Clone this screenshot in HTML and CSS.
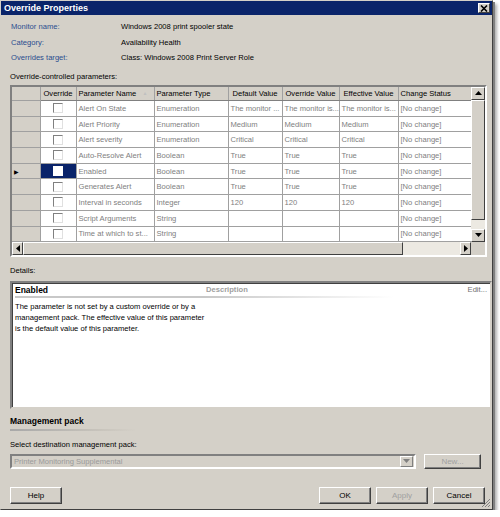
FILE: index.html
```html
<!DOCTYPE html>
<html lang="en">
<head>
  <meta charset="UTF-8">
  <title>Override Properties</title>
  <link rel="stylesheet" href="styles.css">
</head>
<body>
  <div class="window">
    <div class="titlebar">
      <span class="title">Override Properties</span>
      <span class="close-btn">
        <svg width="8" height="7" viewBox="0 0 8 7"><path d="M1 0.5 L7 6.5 M7 0.5 L1 6.5" stroke="#000" stroke-width="1.6"/></svg>
      </span>
    </div>

    <div class="content">
      <div class="info">
        <span class="info-label">Monitor name:</span><span>Windows 2008 print spooler state</span>
        <span class="info-label">Category:</span><span>Availability Health</span>
        <span class="info-label">Overrides target:</span><span>Class: Windows 2008 Print Server Role</span>
      </div>

      <p class="section-label">Override-controlled parameters:</p>

      <div class="grid-box">
        <div class="grid-table">
          <table>
            <colgroup>
              <col style="width:28px"><col style="width:36px"><col style="width:78px"><col style="width:74px">
              <col style="width:54px"><col style="width:57px"><col style="width:59px"><col style="width:73px">
            </colgroup>
            <thead>
              <tr>
                <th class="rowhead"></th>
                <th class="center">Override</th>
                <th>Parameter Name <span class="sort">&#9650;</span></th>
                <th>Parameter Type</th>
                <th class="center">Default Value</th>
                <th class="center">Override Value</th>
                <th class="center">Effective Value</th>
                <th>Change Status</th>
              </tr>
            </thead>
            <tbody id="rows"></tbody>
          </table>
        </div>
        <div class="vscroll">
          <span class="sbtn"><svg width="7" height="4" viewBox="0 0 7 4"><path d="M0 4 L3.5 0 L7 4Z" fill="#000"/></svg></span>
          <span class="vthumb"></span>
          <span class="vtrack"></span>
          <span class="sbtn"><svg width="7" height="4" viewBox="0 0 7 4"><path d="M0 0 L3.5 4 L7 0Z" fill="#000"/></svg></span>
        </div>
        <div class="hscroll">
          <span class="sbtn"><svg width="4" height="7" viewBox="0 0 4 7"><path d="M4 0 L0 3.5 L4 7Z" fill="#000"/></svg></span>
          <span class="hthumb"></span>
          <span class="htrack"></span>
          <span class="sbtn"><svg width="4" height="7" viewBox="0 0 4 7"><path d="M0 0 L4 3.5 L0 7Z" fill="#000"/></svg></span>
        </div>
        <div class="corner"></div>
      </div>

      <p class="section-label details-label">Details:</p>

      <div class="details">
        <div class="details-head">
          <span class="details-title">Enabled</span>
          <span class="details-desc">Description</span>
          <span class="details-edit">Edit...</span>
        </div>
        <p class="details-text">The parameter is not set by a custom override or by a<br>management pack. The effective value of this parameter<br>is the default value of this parameter.</p>
      </div>

      <div class="mp-title">Management pack</div>
      <p class="section-label mp-label">Select destination management pack:</p>
      <div class="mp-row">
        <div class="combo">
          <span class="combo-text">Printer Monitoring Supplemental</span>
          <span class="combo-btn"><svg width="7" height="4" viewBox="0 0 7 4"><path d="M0 0 L3.5 4 L7 0Z" fill="#808080"/></svg></span>
        </div>
        <button class="btn disabled new-btn">New...</button>
      </div>

      <div class="buttons">
        <button class="btn">Help</button>
        <span class="spacer"></span>
        <button class="btn">OK</button>
        <button class="btn disabled">Apply</button>
        <button class="btn">Cancel</button>
      </div>
    </div>
    <svg class="grip" width="11" height="11" viewBox="0 0 11 11"><path d="M10 2 L2 10 M10 5 L5 10 M10 8 L8 10" stroke="#808080" stroke-width="1"/></svg>
  </div>

<script>
  const params = [
    ["Alert On State", "Enumeration", "The monitor ...", "The monitor is...", "The monitor is..."],
    ["Alert Priority", "Enumeration", "Medium", "Medium", "Medium"],
    ["Alert severity", "Enumeration", "Critical", "Critical", "Critical"],
    ["Auto-Resolve Alert", "Boolean", "True", "True", "True"],
    ["Enabled", "Boolean", "True", "True", "True"],
    ["Generates Alert", "Boolean", "True", "True", "True"],
    ["Interval in seconds", "Integer", "120", "120", "120"],
    ["Script Arguments", "String", "", "", ""],
    ["Time at which to st...", "String", "", "", ""]
  ];
  const tbody = document.getElementById("rows");
  tbody.innerHTML = params.map((p, i) => {
    const sel = p[0] === "Enabled";
    return `<tr>
      <td class="rowhead">${sel ? '<span class="arrow">&#9654;</span>' : ''}</td>
      <td class="check-cell${sel ? ' selected' : ''}"><span class="checkbox"></span></td>
      <td>${p[0]}</td><td>${p[1]}</td><td>${p[2]}</td><td>${p[3]}</td><td>${p[4]}</td>
      <td>[No change]</td>
    </tr>`;
  }).join("");
</script>
</body>
</html>
```

FILE: styles.css
```css
/* Classic dialog look */
body {
  margin: 0;
  padding: 0;
  background: #ffffff;
  font-family: "Liberation Sans", Arial, sans-serif;
  font-size: 7.6px;
  color: #000;
}
.window {
  position: relative;
  width: 491px;
  height: 508px;
  background: #d4d0c8;
  border: 1px solid #d4d0c8;
  border-right-color: #404040;
  border-bottom-color: #404040;
  box-shadow: 2px 2px 0 #808080, 4px 4px 3px #b0b0b0;
  overflow: hidden;
}
.titlebar {
  height: 14px;
  background: #0a246a;
  display: flex;
  align-items: center;
  justify-content: space-between;
  padding: 0 2px 0 3px;
}
.title {
  color: #fff;
  font-weight: bold;
  font-size: 9px;
}
.close-btn {
  width: 12px;
  height: 10px;
  background: #d4d0c8;
  border: 1px solid;
  border-color: #fff #404040 #404040 #fff;
  box-sizing: border-box;
  display: flex;
  align-items: center;
  justify-content: center;
}
.content {
  padding: 7px 4px 0 9px;
}
.info {
  display: grid;
  grid-template-columns: 110px 1fr;
  row-gap: 5px;
  line-height: 10.5px;
  margin-left: 1px;
}
.info-label {
  color: #2a4d8f;
}
.section-label {
  margin: 0;
  line-height: 10px;
}
.info + .section-label {
  margin-top: 8px;
}

/* Parameter grid */
.grid-box {
  margin-top: 3px;
  width: 473px;
  border: 2px solid;
  border-color: #808080 #fff #fff #808080;
  display: grid;
  grid-template-columns: 1fr 14px;
  grid-template-rows: 155px 13px;
  background: #d4d0c8;
}
.grid-table {
  overflow: hidden;
  background: #d4d0c8;
}
table {
  border-collapse: collapse;
  table-layout: fixed;
  width: 459px;
  color: #808080;
}
th {
  height: 14px;
  padding: 0 2px;
  font-weight: normal;
  color: #000;
  text-align: left;
  white-space: nowrap;
  overflow: hidden;
  background: #d4d0c8;
  border-right: 1px solid #a0a0a0;
  border-bottom: 1px solid #808080;
  box-sizing: border-box;
}
th.center {
  text-align: center;
}
.sort {
  color: #c0c0c0;
  font-size: 5px;
  margin-left: 4px;
  vertical-align: 1px;
}
td {
  height: 15.7px;
  padding: 0 2px;
  white-space: nowrap;
  overflow: hidden;
  background: #fff;
  border-right: 1px solid #a0a0a0;
  border-bottom: 1px solid #a0a0a0;
  box-sizing: border-box;
}
td.rowhead, th.rowhead {
  background: #d4d0c8;
  border-color: #fff #a0a0a0 #a0a0a0 #fff;
  padding: 0 2px;
}
.arrow {
  font-size: 6px;
  color: #000;
}
.check-cell {
  text-align: center;
}
.check-cell.selected {
  background: #0a246a;
}
.checkbox {
  display: inline-block;
  width: 8px;
  height: 8px;
  border: 1px solid;
  border-color: #808080 #e0e0e0 #e0e0e0 #808080;
  background: #fff;
  vertical-align: middle;
}
.selected .checkbox {
  border-color: #fff;
}

/* Scroll bars */
.vscroll {
  display: flex;
  flex-direction: column;
  background: #ece9e2;
}
.hscroll {
  display: flex;
  background: #ece9e2;
}
.sbtn {
  flex: none;
  width: 12px;
  height: 11px;
  background: #d4d0c8;
  border: 1px solid;
  border-color: #fff #404040 #404040 #fff;
  display: flex;
  align-items: center;
  justify-content: center;
}
.hscroll .sbtn {
  width: 9px;
  height: 11px;
}
.vthumb {
  flex: none;
  height: 118px;
  background: #d4d0c8;
  border: 1px solid;
  border-color: #fff #404040 #404040 #fff;
}
.vtrack, .htrack {
  flex: 1;
}
.hthumb {
  flex: none;
  width: 378px;
  background: #d4d0c8;
  border: 1px solid;
  border-color: #fff #404040 #404040 #fff;
}
.corner {
  background: #d4d0c8;
}

/* Details pane */
.details-label {
  margin-top: 9px;
}
.details {
  margin-top: 5px;
  width: 472px;
  height: 122px;
  background: #fff;
  border: 2px solid;
  border-color: #808080 #d4d0c8 #d4d0c8 #808080;
  box-shadow: inset 1px 1px 0 #404040;
  padding: 1px 3px;
  box-sizing: content-box;
}
.details-head {
  display: flex;
  align-items: center;
  height: 12px;
  border-bottom: 2px solid;
  border-image: linear-gradient(to right, #c8c8c8, #c8c8c8 40%, #fff 80%) 1;
}
.details-title {
  font-weight: bold;
  font-size: 8.5px;
  width: 191px;
}
.details-desc {
  font-weight: bold;
  color: #a0a0a0;
  flex: 1;
}
.details-edit {
  color: #707070;
}
.details-text {
  margin: 3px 0 0;
  line-height: 11px;
}

/* Management pack */
.mp-title {
  margin-top: 7px;
  font-weight: bold;
  font-size: 8.5px;
  line-height: 11px;
  padding-bottom: 2px;
  border-bottom: 2px solid;
  border-image: linear-gradient(to right, #a8a8a8, #c8c4bc 50%, #d4d0c8 70%) 1;
  width: 180px;
}
.mp-label {
  margin-top: 9px;
}
.mp-row {
  display: flex;
  align-items: center;
  margin-top: 4px;
  gap: 8px;
}
.combo {
  width: 406px;
  height: 15px;
  border: 2px solid;
  border-color: #808080 #fff #fff #808080;
  background: #d4d0c8;
  display: flex;
  align-items: center;
  box-sizing: border-box;
}
.combo-text {
  flex: 1;
  color: #9a9a9a;
  padding-left: 2px;
}
.combo-btn {
  width: 11px;
  height: 9px;
  margin-right: 1px;
  border: 1px solid;
  border-color: #fff #808080 #808080 #fff;
  display: flex;
  align-items: center;
  justify-content: center;
}
.btn {
  font-family: "Liberation Sans", Arial, sans-serif;
  font-size: 8px;
  height: 17px;
  width: 52px;
  padding: 0;
  background: #d4d0c8;
  color: #000;
  border: 1px solid;
  border-color: #fff #404040 #404040 #fff;
  box-shadow: inset -1px -1px 0 #808080;
}
.btn.disabled {
  color: #a0a0a0;
}
.new-btn {
  width: 57px;
  height: 15px;
}
.buttons {
  display: flex;
  align-items: center;
  gap: 5px;
  margin-top: 18px;
  padding-right: 3px;
}
.spacer {
  flex: 1;
}
.grip {
  position: absolute;
  right: 1px;
  bottom: 1px;
}
```
